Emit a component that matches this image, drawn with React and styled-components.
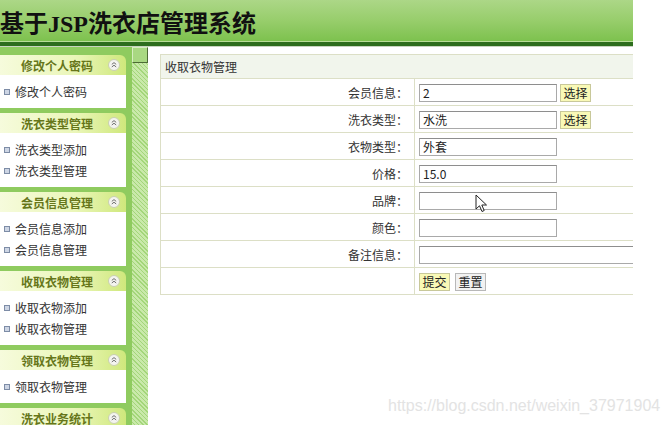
import React from "react";
import styled, { createGlobalStyle } from "styled-components";

const GlobalStyle = createGlobalStyle`
  html, body {
    margin: 0;
    padding: 0;
    background: #ffffff;
  }
  body {
    font-family: "Noto Sans CJK SC", "Liberation Sans", sans-serif;
    font-size: 12px;
    color: #333;
  }
`;

const Screen = styled.div`
  position: relative;
  width: 668px;
  height: 425px;
  overflow: hidden;
  background: #fff;
`;

const Page = styled.div`
  width: 633px;
  height: 425px;
  overflow: hidden;
  display: flex;
  flex-direction: column;
`;

const Header = styled.div`
  height: 42px;
  flex-shrink: 0;
  background: linear-gradient(to bottom, #acd787 0%, #97cd6b 50%, #7cc14d 100%);
  border-bottom: 4px solid #2d6d1d;
  box-shadow: inset 0 -1px 0 #b8dc98;
  display: flex;
  align-items: center;
  h1 {
    margin: 0;
    font-family: "Liberation Serif", "Noto Sans CJK SC", serif;
    font-size: 24px;
    font-weight: bold;
    color: #111;
  }
`;

const Body = styled.div`
  flex: 1;
  display: flex;
  border-top: 1px solid #c8d4c0;
`;

const Sidebar = styled.div`
  width: 132px;
  flex-shrink: 0;
  background: #8fcb5f;
  padding: 8px 6px 0 0;
  box-sizing: border-box;
  display: flex;
  flex-direction: column;
  gap: 5px;
`;

const MenuHead = styled.div`
  height: 20px;
  display: flex;
  align-items: center;
  border-top-right-radius: 6px;
  background: linear-gradient(to right, #f6fbdc 0%, #eaf6b8 60%, #cfe87c 100%);
  span {
    flex: 1;
    text-align: center;
    padding-left: 6px;
    font-weight: bold;
    color: #66761a;
    font-size: 12px;
  }
  svg {
    margin-right: 6px;
  }
`;

const MenuBody = styled.div`
  background: #fff;
  padding: 6px 0;
`;

const MenuItem = styled.div`
  height: 21px;
  display: flex;
  align-items: center;
  padding-left: 4px;
  color: #333;
  &::before {
    content: "";
    width: 4px;
    height: 4px;
    border: 1px solid #7d8ca6;
    background: #cdd5e4;
    margin-right: 5px;
  }
`;

const Strip = styled.div`
  width: 16px;
  flex-shrink: 0;
  background: repeating-linear-gradient(
    45deg,
    #a3d679 0px,
    #a3d679 1px,
    #c9e9aa 1px,
    #c9e9aa 3px
  );
`;

const Toggle = styled.div`
  width: 14px;
  height: 14px;
  background: #a9d882;
  border-left: 1px solid #d6eec0;
  border-top: 1px solid #d6eec0;
  border-right: 1px solid #4d6b35;
  border-bottom: 1px solid #4d6b35;
`;

const Main = styled.div`
  flex: 1;
  padding: 7px 0 0 12px;
  overflow: hidden;
  position: relative;
`;

const Table = styled.table`
  width: 500px;
  border-collapse: collapse;
  td {
    border: 1px solid #dcdfc6;
    height: 26px;
    padding: 0;
    font-size: 12px;
    color: #333;
  }
`;

const TitleCell = styled.td`
  && {
    height: 23px;
    background: #f1f5ec;
    padding-left: 4px;
  }
`;

const LabelCell = styled.td`
  && {
    width: 248px;
    text-align: right;
    padding-right: 6px;
  }
`;

const FieldCell = styled.td`
  && {
    padding-left: 4px;
  }
`;

const Field = styled.input`
  width: ${(p) => p.$w || 138}px;
  height: 18px;
  box-sizing: border-box;
  border: 1px solid #a9a9a9;
  border-top-color: #8e8e8e;
  padding: 0 3px;
  font-family: "Noto Sans CJK SC", "Liberation Sans", sans-serif;
  font-size: 12px;
  color: #222;
  vertical-align: middle;
  outline: none;
`;

const Btn = styled.button`
  height: 18px;
  width: 31px;
  box-sizing: border-box;
  padding: 0;
  margin-left: ${(p) => p.$ml || 0}px;
  border: 1px solid ${(p) => (p.$yellow ? "#c8c89a" : "#b8b8b8")};
  background: ${(p) => (p.$yellow ? "#f9f9b6" : "#f2f2f2")};
  font-family: "Noto Sans CJK SC", "Liberation Sans", sans-serif;
  font-size: 12px;
  color: #222;
  line-height: 16px;
  vertical-align: middle;
`;

const Cursor = styled.svg`
  position: absolute;
  left: 327px;
  top: 147px;
`;

const Watermark = styled.div`
  position: absolute;
  left: 388px;
  top: 397px;
  font-family: "Liberation Sans", Arial, sans-serif;
  font-size: 16px;
  color: #e3e3e3;
  white-space: nowrap;
`;

const Chevron = () => (
  <svg width="12" height="12" viewBox="0 0 12 12">
    <circle cx="6" cy="6" r="5.5" fill="#f4f4f0" stroke="#c9cfb0" />
    <path d="M3.8 5.4 L6 3.6 L8.2 5.4 M3.8 8 L6 6.2 L8.2 8" fill="none" stroke="#6f6f6f" strokeWidth="1" />
  </svg>
);

const menus = [
  { title: "修改个人密码", items: ["修改个人密码"] },
  { title: "洗衣类型管理", items: ["洗衣类型添加", "洗衣类型管理"] },
  { title: "会员信息管理", items: ["会员信息添加", "会员信息管理"] },
  { title: "收取衣物管理", items: ["收取衣物添加", "收取衣物管理"] },
  { title: "领取衣物管理", items: ["领取衣物管理"] },
  { title: "洗衣业务统计", items: ["洗衣业务统计"] },
];

const rows = [
  { label: "会员信息：", value: "2", pick: true },
  { label: "洗衣类型：", value: "水洗", pick: true },
  { label: "衣物类型：", value: "外套" },
  { label: "价格：", value: "15.0" },
  { label: "品牌：", value: "" },
  { label: "颜色：", value: "" },
  { label: "备注信息：", value: "", wide: true },
];

export default function App() {
  return (
    <Screen>
      <GlobalStyle />
      <Page>
        <Header>
          <h1>基于JSP洗衣店管理系统</h1>
        </Header>
        <Body>
          <Sidebar>
            {menus.map((m) => (
              <div key={m.title}>
                <MenuHead>
                  <span>{m.title}</span>
                  <Chevron />
                </MenuHead>
                <MenuBody>
                  {m.items.map((it) => (
                    <MenuItem key={it}>{it}</MenuItem>
                  ))}
                </MenuBody>
              </div>
            ))}
          </Sidebar>
          <Strip>
            <Toggle />
          </Strip>
          <Main>
            <Table>
              <tbody>
                <tr>
                  <TitleCell colSpan={2}>收取衣物管理</TitleCell>
                </tr>
                {rows.map((r) => (
                  <tr key={r.label}>
                    <LabelCell>{r.label}</LabelCell>
                    <FieldCell>
                      <Field readOnly value={r.value} $w={r.wide ? 240 : 138} />
                      {r.pick && (
                        <Btn $yellow $ml={3}>
                          选择
                        </Btn>
                      )}
                    </FieldCell>
                  </tr>
                ))}
                <tr>
                  <LabelCell />
                  <FieldCell>
                    <Btn $yellow>提交</Btn>
                    <Btn $ml={5}>重置</Btn>
                  </FieldCell>
                </tr>
              </tbody>
            </Table>
            <Cursor width="13" height="19" viewBox="0 0 13 19">
              <path d="M1 1 L1 15 L4.5 11.8 L7 17.5 L9.2 16.5 L6.8 11 L11.5 11 Z" fill="#fff" stroke="#222" strokeWidth="1" strokeLinejoin="round" />
            </Cursor>
          </Main>
        </Body>
      </Page>
      <Watermark>https://blog.csdn.net/weixin_37971904</Watermark>
    </Screen>
  );
}
